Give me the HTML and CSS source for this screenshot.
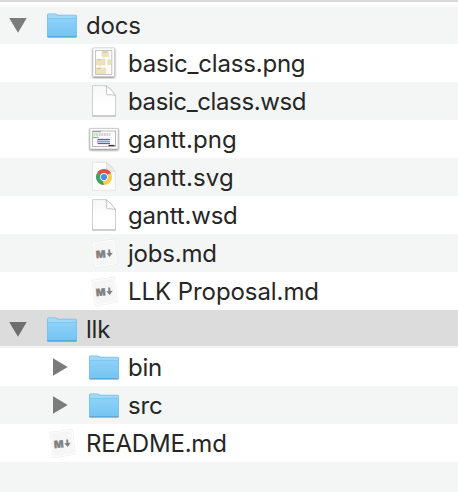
FILE: index.html
```
<!DOCTYPE html>
<html lang="en">
<head>
<meta charset="utf-8">
<title>Files</title>
<link rel="stylesheet" href="styles.css">
</head>
<body>
<svg class="defs" width="0" height="0" aria-hidden="true">
  <defs>
    <linearGradient id="front" x1="0" y1="0" x2="0" y2="1"><stop offset="0" stop-color="#8ed2f9"/><stop offset="1" stop-color="#75c4f3"/></linearGradient>
    <linearGradient id="paper" x1="0" y1="0" x2="0" y2="1"><stop offset="0" stop-color="#f7f7f7"/><stop offset=".6" stop-color="#fff"/></linearGradient>
    <symbol id="folder" viewBox="0 0 32 32">
      <path d="M1.500 28.500h29" stroke="#000" stroke-opacity=".25" stroke-width="1"/>
      <path d="M1 6a1.500 1.500 0 0 1 1.500-1.500H9.300c1.400 0 1.800 1.300 3.500 1.300H29.500A1.500 1.500 0 0 1 31 7.300V27a1 1 0 0 1-1 1H2a1 1 0 0 1-1-1z" fill="#74bde6"/>
      <path d="M1.700 6.200a1 1 0 0 1 1-1H9c1.200 0 1.800 1.400 3.600 1.400H29.500q.8 0 .8.900v2H1.700z" fill="#a0daf9"/>
      <path d="M1.600 9.300h28.800V27H1.600z" fill="url(#front)"/>
      <path d="M1.500 9.300h29" stroke="#77bfe6" stroke-width=".6"/>
      <path d="M1.300 27.500h29.400" stroke="#5ea6d1" stroke-width=".9"/>
    </symbol>
    <symbol id="file" viewBox="0 0 32 32">
      <path d="M4.500.6h13.500q5 2.500 9.500 10v20.300h-23z" fill="url(#paper)" stroke="#c4c4c4" stroke-width=".8"/>
      <path d="M4.300 31h23.400" stroke="#a8a8a8" stroke-width=".8"/>
      <path d="M18 .6q1 2 .6 7.200v1.200q0 .8 1 .8 5-.3 7.900.8Q23 3.500 18 .6z" fill="#fff" stroke="#b8b8b8" stroke-width=".8"/>
    </symbol>
    <symbol id="class-image" viewBox="0 0 32 32">
      <rect class="lift" x="5" y="1" width="21.300" height="28.500" fill="#fff" stroke="#c9c9c9" stroke-width=".6"/>
      <rect x="7.600" y="3.500" width="16.200" height="24" fill="#fff" stroke="#bdbdc1" stroke-width=".9"/>
      <path d="M16 10v2M12 17v4M21 10v4" stroke="#ddd" stroke-width=".7"/>
      <path d="M14 4.500h6.500v5H14zM8.500 12.300h8.500v5.700H8.500zM19.700 13h4v4.500h-4zM8.500 21h9v5.800h-9z" fill="#ece3b8" stroke="#dcd3ae" stroke-width=".5"/>
      <path d="M15 5h4M9.500 12.800h3M9.500 21.500h3" stroke="#c9be92" stroke-width="1"/>
    </symbol>
    <symbol id="gantt-image" viewBox="0 0 32 32">
      <rect class="lift" x="2" y="5.500" width="28" height="20.500" fill="#fff" stroke="#bbb" stroke-width=".6"/>
      <rect x="4.500" y="8" width="23" height="15.500" fill="#fff" stroke="#b0b0b0" stroke-width=".9"/>
      <path d="M5 8.700h8" stroke="#888" stroke-width=".9"/>
      <path d="M5.500 11.500h17" stroke="#d2d2d2" stroke-width="3" stroke-dasharray="2 .6"/>
      <path d="M5 14.500h5.500" stroke="#78c963" stroke-width="1.300"/>
      <path d="M9.500 15.800v5" stroke="#e9a3c7" stroke-width="1"/>
      <path d="M10 16.500h12" stroke="#7a45cf" stroke-width="1.300"/>
      <path d="M10 18.500h12" stroke="#58b8df" stroke-width="1.600"/>
      <path d="M10 20.500h12" stroke="#c0308c" stroke-width="1.300"/>
      <path d="M20.500 22.500h6" stroke="#333" stroke-width="1.200"/>
    </symbol>
    <symbol id="chrome" viewBox="0 0 32 32">
      <path d="M4.500 1.300h13.500q5 2 9.300 9.500v18.500h-22.800z" fill="#fcfcfc" stroke="#dedede" stroke-width=".7"/>
      <path d="M18 1.300q1 2 .7 6.700 0 1.500 1.300 1.500 4.500 0 7.300 1.300Q23 4 18 1.300z" fill="#ececec" stroke="#cfcfcf" stroke-width=".6"/>
      <path d="M16 16L9.070 12A8 8 0 0 1 22.930 12z" fill="#dc5145"/>
      <path d="M16 16L22.930 12A8 8 0 0 1 16 24z" fill="#f8cf4b"/>
      <path d="M16 16V24A8 8 0 0 1 9.070 12z" fill="#40a363"/>
      <path d="M16 12.200h7.040L22.930 12 16 8.500z" fill="#dc5145"/>
      <path d="M19.290 17.900L16 24l-1.500-5z" fill="#f8cf4b"/>
      <path d="M12.710 17.900L9.070 12l4.500 1.500z" fill="#40a363"/>
      <circle cx="16" cy="16" r="3.900" fill="#fff"/>
      <circle cx="16" cy="16" r="3.100" fill="#4c8bea"/>
    </symbol>
    <symbol id="markdown" viewBox="0 0 32 32">
      <path d="M4 5.400L26.300 2.100 29.400 27.200 7.200 30.800z" fill="#f6f6f6" stroke="#e6e6e6" stroke-width=".6"/>
      <path d="M4.700 6L25.800 2.900 28.700 26.700 7.700 30z" fill="none" stroke="#fff" stroke-width=".8"/>
      <g transform="rotate(-5 16 17)">
        <text class="mark" x="7.900" y="20.500">M</text>
        <path d="M21.500 13v5" stroke="#808080" stroke-width="1.900"/>
        <path d="M18.300 16.500h6.400l-3.200 3.900z" fill="#808080"/>
      </g>
    </symbol>
    <symbol id="opened" viewBox="0 0 18 18"><path d="M.2 1.900h17.500L9 16.700z"/></symbol>
    <symbol id="closed" viewBox="0 0 18 18"><path d="M2 .2v17.600L16.700 9z"/></symbol>
  </defs>
</svg>
<ul class="tree">
  <li class="row"><span class="toggle"><svg><use href="#opened"/></svg></span><svg class="icon"><use href="#folder"/></svg><span class="name">docs</span></li>
  <li class="row nested"><span class="toggle"></span><svg class="icon"><use href="#class-image"/></svg><span class="name">basic_class.png</span></li>
  <li class="row nested"><span class="toggle"></span><svg class="icon"><use href="#file"/></svg><span class="name tight">basic_class.wsd</span></li>
  <li class="row nested"><span class="toggle"></span><svg class="icon"><use href="#gantt-image"/></svg><span class="name loose">gantt.png</span></li>
  <li class="row nested"><span class="toggle"></span><svg class="icon"><use href="#chrome"/></svg><span class="name loose">gantt.svg</span></li>
  <li class="row nested"><span class="toggle"></span><svg class="icon"><use href="#file"/></svg><span class="name">gantt.wsd</span></li>
  <li class="row nested"><span class="toggle"></span><svg class="icon"><use href="#markdown"/></svg><span class="name">jobs.md</span></li>
  <li class="row nested"><span class="toggle"></span><svg class="icon"><use href="#markdown"/></svg><span class="name even">LLK Proposal.md</span></li>
  <li class="row selected"><span class="toggle"><svg><use href="#opened"/></svg></span><svg class="icon"><use href="#folder"/></svg><span class="name">llk</span></li>
  <li class="row nested"><span class="toggle"><svg><use href="#closed"/></svg></span><svg class="icon"><use href="#folder"/></svg><span class="name">bin</span></li>
  <li class="row nested"><span class="toggle"><svg><use href="#closed"/></svg></span><svg class="icon"><use href="#folder"/></svg><span class="name">src</span></li>
  <li class="row"><span class="toggle"></span><svg class="icon"><use href="#markdown"/></svg><span class="name">README.md</span></li>
  <li class="row"></li>
</ul>
</body>
</html>
```

FILE: styles.css
```
* { box-sizing: border-box; }
body {
  margin: 0;
  height: 492px;
  overflow: hidden;
  background: #fff;
  color: #262626;
  font: 24px/38px Inter, "Liberation Sans", sans-serif;
}
.defs { display: block; height: 0; }
.tree {
  list-style: none;
  margin: 0;
  padding: 4px 0 0;
  border-top: 2px solid #d9d9d9;
}
.row {
  display: flex;
  align-items: center;
  height: 38px;
}
.row:nth-child(odd) { background: #f4f5f5; }
.row:last-child { height: 48px; }
.row.nested { padding-left: 42px; }
.row.selected {
  background: #dcdcdc;
  box-shadow: inset 0 -2px #f4f5f5;
}
.toggle {
  display: flex;
  align-items: center;
  flex: none;
  width: 46px;
  height: 38px;
  padding-left: 9px;
}
.toggle svg { width: 18px; height: 18px; fill: #7b7b7b; }
.selected .toggle svg { fill: #6e6e6e; }
.icon { flex: none; width: 32px; height: 32px; margin-right: 8px; overflow: visible; }
.name { padding-top: 2px; line-height: 36px; white-space: pre; letter-spacing: -0.2px; }
.name.tight { letter-spacing: -0.38px; }
.name.loose { letter-spacing: 0.1px; }
.name.even { letter-spacing: -0.07px; }
.lift { filter: drop-shadow(0 1px 1px rgba(0, 0, 0, .5)); }
.mark { font: 900 10px Inter, sans-serif; fill: #808080; stroke: #808080; stroke-width: .3px; }
```
